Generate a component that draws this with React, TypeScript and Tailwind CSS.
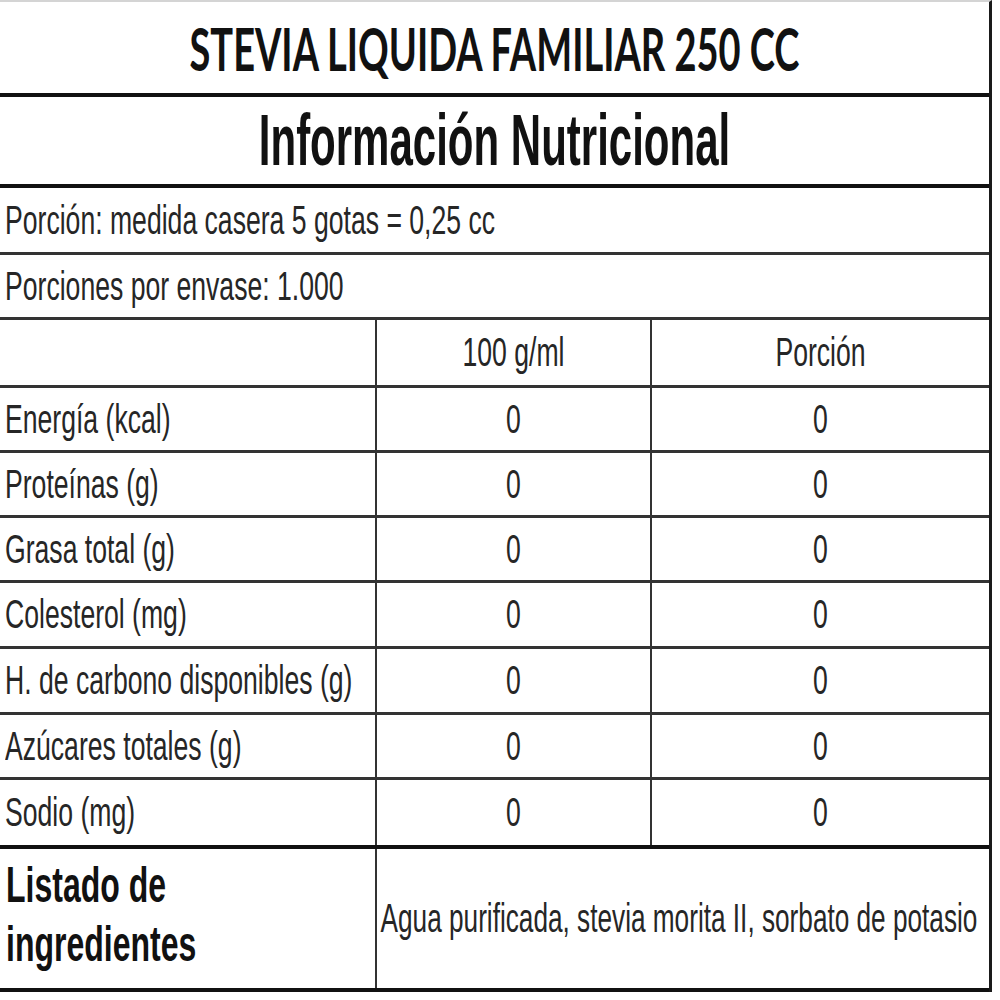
const rows = [
  { label: "Energía (kcal)", per100: "0", portion: "0", h: "h-[65px]" },
  { label: "Proteínas (g)", per100: "0", portion: "0", h: "h-[65px]" },
  { label: "Grasa total (g)", per100: "0", portion: "0", h: "h-[65px]" },
  { label: "Colesterol (mg)", per100: "0", portion: "0", h: "h-[66px]" },
  { label: "H. de carbono disponibles (g)", per100: "0", portion: "0", h: "h-[66px]" },
  { label: "Azúcares totales (g)", per100: "0", portion: "0", h: "h-[65px]" },
]

// the source image is vertically stretched, so text is drawn narrow and scaled up in y
const Body = ({ children }: { children: React.ReactNode }) => (
  <span className="inline-block whitespace-nowrap text-[26.6px] leading-none text-[#262626] scale-y-[1.55]">
    {children}
  </span>
)

export default function App() {
  return (
    <div
      className="min-h-screen w-[1000px] bg-white"
      style={{ fontFamily: '"Liberation Sans", Arial, sans-serif' }}
    >
      <div className="w-[992px] border-t-2 border-r-[3px] border-t-[#d4d4d4] border-r-[#1a1a1a]">
        {/* title */}
        <div className="flex h-[95px] items-center justify-center border-b-4 border-[#111]">
          <span
            className="inline-block whitespace-nowrap text-[38px] font-bold leading-none text-[#111] scale-y-[1.55]"
            style={{ fontFamily: "Lato, sans-serif" }}
          >
            STEVIA LIQUIDA FAMILIAR 250 CC
          </span>
        </div>

        <div className="flex h-[91px] items-center justify-center border-b-4 border-[#111]">
          <span className="inline-block whitespace-nowrap text-[42px] font-bold leading-none text-[#111] scale-y-[1.72]">
            Información Nutricional
          </span>
        </div>

        <div className="flex h-[67px] items-center border-b-[3px] border-[#333] pl-[5px]">
          <Body>Porción: medida casera 5 gotas = 0,25 cc</Body>
        </div>
        <div className="flex h-[65px] items-center border-b-[3px] border-[#333] pl-[5px]">
          <Body>Porciones por envase: 1.000</Body>
        </div>

        <div className="grid h-[68px] grid-cols-[377px_275px_1fr] border-b-[3px] border-[#333]">
          <div className="border-r-2 border-[#333]" />
          <div className="flex items-center justify-center border-r-2 border-[#333]">
            <Body>100 g/ml</Body>
          </div>
          <div className="flex items-center justify-center">
            <Body>Porción</Body>
          </div>
        </div>

        {rows.map((r) => (
          <div
            key={r.label}
            className={`grid ${r.h} grid-cols-[377px_275px_1fr] border-b-[3px] border-[#333]`}
          >
            <div className="flex items-center border-r-2 border-[#333] pl-[5px]">
              <Body>{r.label}</Body>
            </div>
            <div className="flex items-center justify-center border-r-2 border-[#333]">
              <Body>{r.per100}</Body>
            </div>
            <div className="flex items-center justify-center">
              <Body>{r.portion}</Body>
            </div>
          </div>
        ))}

        <div className="grid h-[69px] grid-cols-[377px_275px_1fr] border-b-4 border-[#111]">
          <div className="flex items-center border-r-2 border-[#333] pl-[5px]">
            <Body>Sodio (mg)</Body>
          </div>
          <div className="flex items-center justify-center border-r-2 border-[#333]">
            <Body>0</Body>
          </div>
          <div className="flex items-center justify-center">
            <Body>0</Body>
          </div>
        </div>

        {/* ingredients */}
        <div className="grid h-[143px] grid-cols-[377px_1fr] border-b-4 border-[#111]">
          <div className="flex flex-col justify-center border-r-2 border-[#333] pl-[6px]">
            <div className="-translate-y-[4px] scale-y-[1.58] origin-left text-[32px] font-bold leading-[37px] text-[#111]">
              <div>Listado de</div>
              <div>ingredientes</div>
            </div>
          </div>
          <div className="flex items-center justify-center pr-[8px]">
            <span className="inline-block whitespace-nowrap text-[26.2px] leading-none text-[#262626] scale-y-[1.55]">
              Agua purificada, stevia morita II, sorbato de potasio
            </span>
          </div>
        </div>
      </div>
    </div>
  )
}
